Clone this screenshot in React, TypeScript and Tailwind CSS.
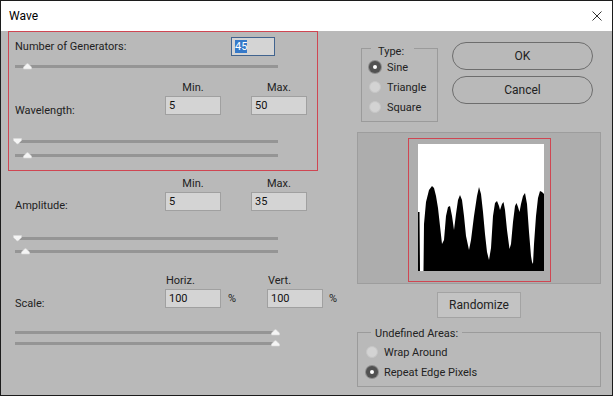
import React from "react";

const wave =
  "0,127 0,68 1.5,68 2,127 5.5,127 6,80 8,58 11,46 14,42 16,44 18,52 20,64 22,82 24,100 26,96 28,72 30,63 32,62 34,72 36,86 38,70 40,56 42,51 44,56 46,72 48,92 51,106 53,96 56,72 59,52 61,43 63,50 65,68 67,90 69,108 71,116 73,104 75,72 77,59 79,57 81,62 82,66 84,60 85.5,58 87,66 89,86 91.5,105 93,100 95,78 97,62 98.5,59 100,63 101.5,68 103,60 105,52 107,49 109,60 111,88 113,112 114,118 115,120 116,100 118,72 120,54 122,47 124,48 126,50 126,127";

function Thumb({down}: {down?: boolean}) {
  return (
    <svg width="9" height="7" viewBox="0 0 9 7">
      {down ? (
        <path d="M0.5 0.5 H8.5 V2.5 L5.4 5.6 Q4.5 6.5 3.6 5.6 L0.5 2.5 Z" fill="#f5f5f5" stroke="#d8d8d8" strokeWidth="0.6"/>
      ) : (
        <path d="M0.5 6 V4 L3.6 1 Q4.5 0.1 5.4 1 L8.5 4 V6 Z" fill="#f5f5f5" stroke="#d8d8d8" strokeWidth="0.6"/>
      )}
    </svg>
  );
}

function Slider({at, down, className = ""}: {at: number; down?: boolean; className?: string}) {
  return (
    <div className={`relative h-[12px] w-[263px] pt-[5px] ${className}`}>
      <div className="h-[3px] bg-[#959595]"/>
      <div className="absolute top-[3px] flex" style={{left: at}}>
        <Thumb down={down}/>
      </div>
    </div>
  );
}

function Field({value}: {value: string}) {
  return (
    <div className="flex h-[19px] w-[56px] shrink-0 items-center border border-[#a0a0a0] bg-[#d4d4d4] pl-[3px] text-[#111]">
      {value}
    </div>
  );
}

function Radio({on, label}: {on?: boolean; label: string}) {
  return (
    <div className="flex h-[20px] items-center">
      {on ? (
        <span className="flex h-[12px] w-[12px] items-center justify-center rounded-full bg-[#515151] ring-1 ring-[#8a8a8a]">
          <span className="h-[4px] w-[4px] rounded-full bg-white"/>
        </span>
      ) : (
        <span className="h-[12px] w-[12px] rounded-full border border-[#c6c6c6] bg-[#d3d3d3]"/>
      )}
      <span className="ml-[6px]">{label}</span>
    </div>
  );
}

function PillButton({children}: {children: React.ReactNode}) {
  return (
    <div className="flex h-[28px] w-[141px] items-center justify-center rounded-full border border-[#6d6d6d] text-[12px]">
      {children}
    </div>
  );
}

export default function App() {
  return (
    <div className="flex h-[396px] w-[613px] flex-col overflow-hidden border border-[#1c1c1c] bg-[#b9b9b9] font-['Roboto',sans-serif] text-[11px] leading-[15px] text-[#222]">
      {/* TITLE BAR */}
      <div className="flex h-[30px] items-center justify-between bg-white pl-[8px] pr-[10px] text-[12px] text-black">
        <span>Wave</span>
        <svg width="10" height="10" viewBox="0 0 10 10">
          <path d="M0.5 0.5 L9.5 9.5 M9.5 0.5 L0.5 9.5" stroke="#333" strokeWidth="1"/>
        </svg>
      </div>

      <div className="flex flex-1">
        {/* LEFT */}
        <div className="ml-[7px] flex w-[310px] shrink-0 flex-col">
          <div className="border border-[#cf4652] pb-[9px] pl-[6px] pt-[5px]">
            <div className="flex h-[19px] items-center">
              <span className="w-[216px] shrink-0">Number of Generators:</span>
              <div className="flex h-[19px] w-[44px] items-center border border-[#41648f] bg-[#d4d4d4] pl-[3px]">
                <span className="bg-[#3579c9] leading-[13px] text-white">45</span>
              </div>
            </div>
            <Slider at={8} className="mt-[4px]"/>
            <div className="mt-[8px] flex h-[15px] pl-[150px]">
              <span className="w-[56px] text-center">Min.</span>
              <span className="ml-[30px] w-[56px] text-center">Max.</span>
            </div>
            <div className="mt-[1px] flex h-[19px] items-center">
              <span className="mt-[9px] w-[150px] shrink-0">Wavelength:</span>
              <Field value="5"/>
              <div className="ml-[30px]"><Field value="50"/></div>
            </div>
            <Slider at={-2} down className="mt-[20px]"/>
            <Slider at={8} className="mt-[2px]"/>
          </div>

          <div className="flex flex-col pl-[7px]">
            <div className="mt-[5px] flex h-[15px] pl-[150px]">
              <span className="w-[56px] text-center">Min.</span>
              <span className="ml-[30px] w-[56px] text-center">Max.</span>
            </div>
            <div className="mt-[1px] flex h-[19px] items-center">
              <span className="mt-[8px] w-[150px] shrink-0">Amplitude:</span>
              <Field value="5"/>
              <div className="ml-[30px]"><Field value="35"/></div>
            </div>
            <Slider at={-2} down className="mt-[21px]"/>
            <Slider at={6} className="mt-[1px]"/>

            <div className="mt-[16px] flex h-[15px] pl-[151px]">
              <span className="w-[102px] shrink-0">Horiz.</span>
              <span>Vert.</span>
            </div>
            <div className="mt-[1px] flex h-[19px] items-center">
              <span className="mt-[9px] w-[150px] shrink-0">Scale:</span>
              <Field value="100"/>
              <span className="w-[46px] shrink-0 pl-[7px]">%</span>
              <Field value="100"/>
              <span className="shrink-0 pl-[6px]">%</span>
            </div>
            <Slider at={256} className="mt-[18px]"/>
            <Slider at={256} className="-mt-px"/>
          </div>
        </div>

        {/* RIGHT */}
        <div className="ml-[39px] flex w-[244px] shrink-0 flex-col pt-[11px]">
          <div className="flex items-start">
            <div className="relative ml-[4px] mt-[6px] h-[74px] w-[77px] border border-[#9b9b9b] pb-[3px] pl-[7px] pt-[8px]">
              <span className="absolute -top-[5px] left-[9px] bg-[#b9b9b9] pl-[7px] pr-[10px]">Type:</span>
              <Radio on label="Sine"/>
              <Radio label="Triangle"/>
              <Radio label="Square"/>
            </div>
            <div className="ml-[14px] flex flex-col gap-[6px]">
              <PillButton>OK</PillButton>
              <PillButton>Cancel</PillButton>
            </div>
          </div>

          <div className="mt-[10px] flex h-[152px] w-[244px] justify-center border border-[#9d9d9d] bg-[#adadad] pt-[5px]">
            <div className="h-[144px] w-[143px] border border-[#cf4652] pl-[9px] pt-[5px]">
              <svg width="126" height="127" viewBox="0 0 126 127" className="block">
                <rect width="126" height="127" fill="#fff"/>
                <polygon points={wave} fill="#000"/>
              </svg>
            </div>
          </div>

          <div className="mt-[8px] flex justify-center">
            <div className="flex h-[26px] w-[84px] items-center justify-center border border-[#a3a3a3] bg-[#c3c3c3] text-[12px]">
              Randomize
            </div>
          </div>

          <div className="relative mt-[14px] h-[55px] border border-[#9b9b9b] pl-[8px] pt-[9px]">
            <span className="absolute -top-[7px] left-[13px] bg-[#b9b9b9] px-[4px]">Undefined Areas:</span>
            <Radio label="Wrap Around"/>
            <Radio on label="Repeat Edge Pixels"/>
          </div>
        </div>
      </div>
    </div>
  );
}
